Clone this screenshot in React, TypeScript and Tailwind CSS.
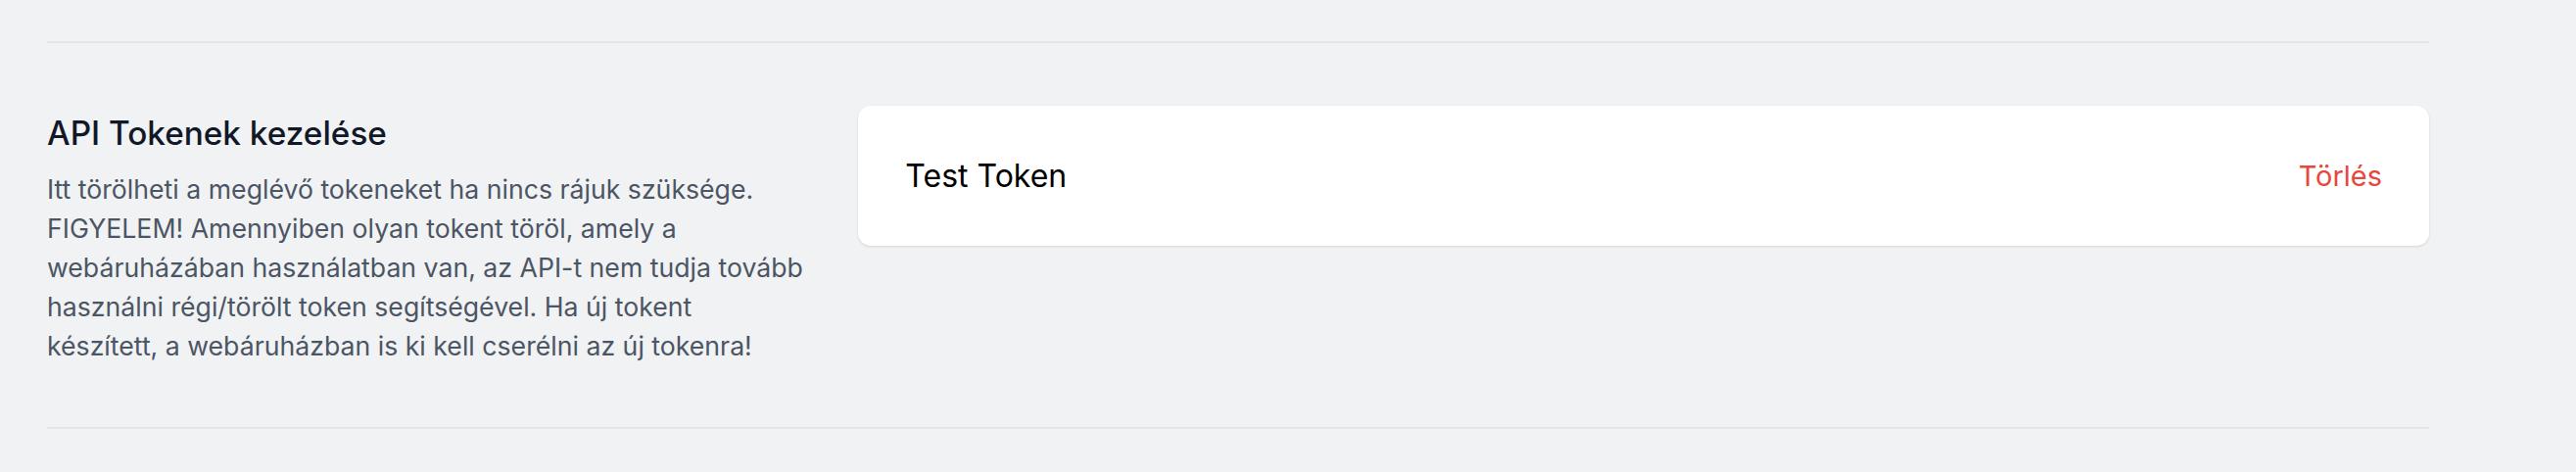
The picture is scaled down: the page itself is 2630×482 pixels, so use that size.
import React from "react";

export default function App() {
  return (
    <div className="min-h-[482px] bg-[#f1f2f4]" style={{ fontFamily: "Inter, 'Noto Sans', sans-serif" }}>
      <div className="ml-[48px] w-[2432px]">
        <div className="pt-[42px]">
          <div className="h-[2px] bg-[#e2e4e8]" />
        </div>
        <div className="mt-[64px] grid grid-cols-3 gap-[53px]">
          <div className="pt-[5px]">
            <h3 className="text-[33.33px] leading-[46.67px] font-medium text-[#111827]">API Tokenek kezelése</h3>
            <p className="mt-[13px] text-[26.67px] leading-[40px] text-[#4b5563]">
              Itt törölheti a meglévő tokeneket ha nincs rájuk szüksége. FIGYELEM! Amennyiben olyan tokent töröl, amely a webáruházában használatban van, az API-t nem tudja tovább használni régi/törölt token segítségével. Ha új tokent készített, a webáruházban is ki kell cserélni az új tokenra!
            </p>
          </div>
          <div className="col-span-2">
            <div className="rounded-[13px] bg-white px-[48px] py-[40px] shadow-[0_1px_3px_0_rgba(0,0,0,0.1),0_1px_2px_-1px_rgba(0,0,0,0.1)]">
              <div className="flex h-[63px] items-center justify-between">
                <div className="text-[32px] leading-none text-black">Test Token</div>
                <button className="text-[29px] leading-none text-[#e5483e]">Törlés</button>
              </div>
            </div>
          </div>
        </div>
        <div className="mt-[63px]">
          <div className="h-[2px] bg-[#e2e4e8]" />
        </div>
      </div>
    </div>
  );
}
